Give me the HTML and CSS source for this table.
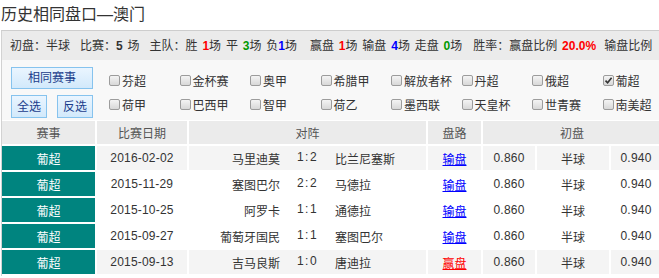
FILE: index.html
```html
<!DOCTYPE html>
<html lang="zh-CN">
<head>
<meta charset="utf-8">
<title>历史相同盘口—澳门</title>
<link rel="stylesheet" href="styles.css">
</head>
<body>
<div class="title">历史相同盘口—澳门</div>
<div class="panel">
  <div class="summary">
    <span class="s1">初盘：半球</span>
    <span class="s2">比赛：<b class="n">5</b> 场</span>
    <span class="s3">主队：胜 <b class="red">1</b>场 平 <b class="green">3</b>场 负<b class="blue">1</b>场</span>
    <span class="s4">赢盘 <b class="red">1</b>场 输盘 <b class="blue">4</b>场 走盘 <b class="green">0</b>场</span>
    <span class="s5">胜率：赢盘比例 <b class="red">20.0%</b></span>
    <span class="s6">输盘比例</span>
  </div>
  <div class="filter">
    <div class="btns">
      <button class="btn btn-main">相同赛事</button>
      <div class="btn-row">
        <button class="btn btn-sm">全选</button>
        <button class="btn btn-sm">反选</button>
      </div>
    </div>
    <div class="divider"></div>
    <div class="checks">
      <label class="chk"><span class="box"></span>芬超</label>
      <label class="chk"><span class="box"></span>金杯赛</label>
      <label class="chk"><span class="box"></span>奥甲</label>
      <label class="chk"><span class="box"></span>希腊甲</label>
      <label class="chk"><span class="box"></span>解放者杯</label>
      <label class="chk"><span class="box"></span>丹超</label>
      <label class="chk"><span class="box"></span>俄超</label>
      <label class="chk"><span class="box on"><svg viewBox="0 0 9 9" width="9" height="9"><path d="M1.5 4.6 L3.6 6.8 L7.6 1.8" fill="none" stroke="#333" stroke-width="1.6"/></svg></span>葡超</label>
      <label class="chk"><span class="box"></span>荷甲</label>
      <label class="chk"><span class="box"></span>巴西甲</label>
      <label class="chk"><span class="box"></span>智甲</label>
      <label class="chk"><span class="box"></span>荷乙</label>
      <label class="chk"><span class="box"></span>墨西联</label>
      <label class="chk"><span class="box"></span>天皇杯</label>
      <label class="chk"><span class="box"></span>世青赛</label>
      <label class="chk"><span class="box"></span>南美超</label>
    </div>
  </div>
  <table class="tbl">
    <colgroup>
      <col class="c1"><col class="c2"><col class="c3"><col class="c4"><col class="c5"><col class="c6"><col class="c7">
    </colgroup>
    <thead>
      <tr><th>赛事</th><th>比赛日期</th><th>对阵</th><th>盘路</th><th colspan="3">初盘</th></tr>
    </thead>
    <tbody>
      <tr class="alt">
        <td class="lg">葡超</td><td class="num">2016-02-02</td>
        <td><div class="match"><span class="home">马里迪莫</span><span class="score">1:2</span><span class="away">比兰尼塞斯</span></div></td>
        <td><a class="lose">输盘</a></td><td class="num">0.860</td><td>半球</td><td class="num">0.940</td>
      </tr>
      <tr>
        <td class="lg">葡超</td><td class="num">2015-11-29</td>
        <td><div class="match"><span class="home">塞图巴尔</span><span class="score">2:2</span><span class="away">马德拉</span></div></td>
        <td><a class="lose">输盘</a></td><td class="num">0.860</td><td>半球</td><td class="num">0.940</td>
      </tr>
      <tr>
        <td class="lg">葡超</td><td class="num">2015-10-25</td>
        <td><div class="match"><span class="home">阿罗卡</span><span class="score">1:1</span><span class="away">通德拉</span></div></td>
        <td><a class="lose">输盘</a></td><td class="num">0.860</td><td>半球</td><td class="num">0.940</td>
      </tr>
      <tr>
        <td class="lg">葡超</td><td class="num">2015-09-27</td>
        <td><div class="match"><span class="home">葡萄牙国民</span><span class="score">1:1</span><span class="away">塞图巴尔</span></div></td>
        <td><a class="lose">输盘</a></td><td class="num">0.860</td><td>半球</td><td class="num">0.940</td>
      </tr>
      <tr class="alt">
        <td class="lg">葡超</td><td class="num">2015-09-13</td>
        <td><div class="match"><span class="home">吉马良斯</span><span class="score">1:0</span><span class="away">唐迪拉</span></div></td>
        <td><a class="win">赢盘</a></td><td class="num">0.860</td><td>半球</td><td class="num">0.940</td>
      </tr>
    </tbody>
  </table>
</div>
</body>
</html>
```

FILE: styles.css
```css
* { box-sizing: border-box; }
html, body { margin: 0; padding: 0; background: #fff; overflow: hidden; }
body {
  width: 663px;
  font-family: "Liberation Sans", "Noto Sans CJK SC", sans-serif;
  font-size: 12px;
  color: #333;
}
.title {
  height: 30px;
  line-height: 30px;
  font-size: 16px;
  padding-left: 1px;
  color: #333;
}
.panel {
  margin-left: 1px;
  border-left: 1px solid #d2d2d2;
  border-top: 1px solid #cdcdcd;
}
.summary {
  display: flex;
  white-space: nowrap;
  height: 29px;
  line-height: 27px;
  padding-top: 2px;
  background: #ebebeb;
  word-spacing: 1.5px;
  overflow: hidden;
}
.summary b { font-weight: bold; }
.s1 { margin-left: 8px; }
.s2 { margin-left: 10px; }
.s3 { margin-left: 10px; }
.s4 { margin-left: 13px; }
.s5 { margin-left: 11px; }
.s6 { margin-left: 8px; }
.n { color: #333; }
.red { color: #f00; }
.green { color: #090; }
.blue { color: #00f; }

.filter {
  display: flex;
  height: 60px;
  padding: 7px 0 0 9px;
  background: #f8f8f8;
}
.btns {
  width: 82px;
  display: flex;
  flex-direction: column;
  gap: 6px;
}
.btn {
  font-family: "Liberation Sans", "Noto Sans CJK SC", sans-serif;
  font-size: 12px;
  color: #1b3d8c;
  border: 1px solid #86c3ee;
  background: linear-gradient(#eaf5ff, #d2e9fb);
  padding: 0;
  margin: 0;
  line-height: 20px;
}
.btn-main { height: 22px; width: 82px; }
.btn-row { display: flex; justify-content: space-between; }
.btn-sm { height: 23px; width: 36px; }
.divider {
  width: 1px;
  height: 50px;
  background: #c6dbea;
  margin: 0 8px;
}
.checks {
  display: grid;
  grid-template-columns: repeat(8, 70.5px);
  grid-auto-rows: 24px;
  margin-top: 1px;
}
.chk {
  display: flex;
  align-items: center;
  gap: 2px;
  white-space: nowrap;
  color: #333;
}
.box {
  display: inline-flex;
  align-items: center;
  justify-content: center;
  width: 11px;
  height: 11px;
  border: 1px solid #9c9c9c;
  border-radius: 2px;
  background: linear-gradient(#f4f4f4, #d8d8d8);
}

.tbl {
  margin-top: 1px;
  border-collapse: separate;
  border-spacing: 0;
  table-layout: fixed;
  width: 661px;
}
.c1 { width: 95px; }
.c2 { width: 92px; }
.c3 { width: 239px; }
.c4 { width: 55px; }
.c5 { width: 54px; }
.c6 { width: 74px; }
.c7 { width: 52px; }
.tbl th, .tbl td {
  padding: 0;
  text-align: center;
  border-right: 2px solid #fff;
  border-bottom: 2px solid #fff;
  white-space: nowrap;
}
.tbl th {
  height: 25px;
  background: #ebebeb;
  color: #555;
  font-weight: normal;
}
.tbl td { height: 26px; background: #fff; color: #333; }
.tbl td.num { letter-spacing: 0.2px; }
.tbl tr.alt td { background: #f4f4f4; }
.tbl td.lg, .tbl tr.alt td.lg { background: #00847f; color: #fff; }
.match {
  display: grid;
  grid-template-columns: 91px 55px 1fr;
}
.home { text-align: right; }
.score { text-align: center; letter-spacing: 1.5px; }
.away { text-align: left; }
.lose { color: #00f; text-decoration: underline; }
.win { color: #f00; text-decoration: underline; }
```
